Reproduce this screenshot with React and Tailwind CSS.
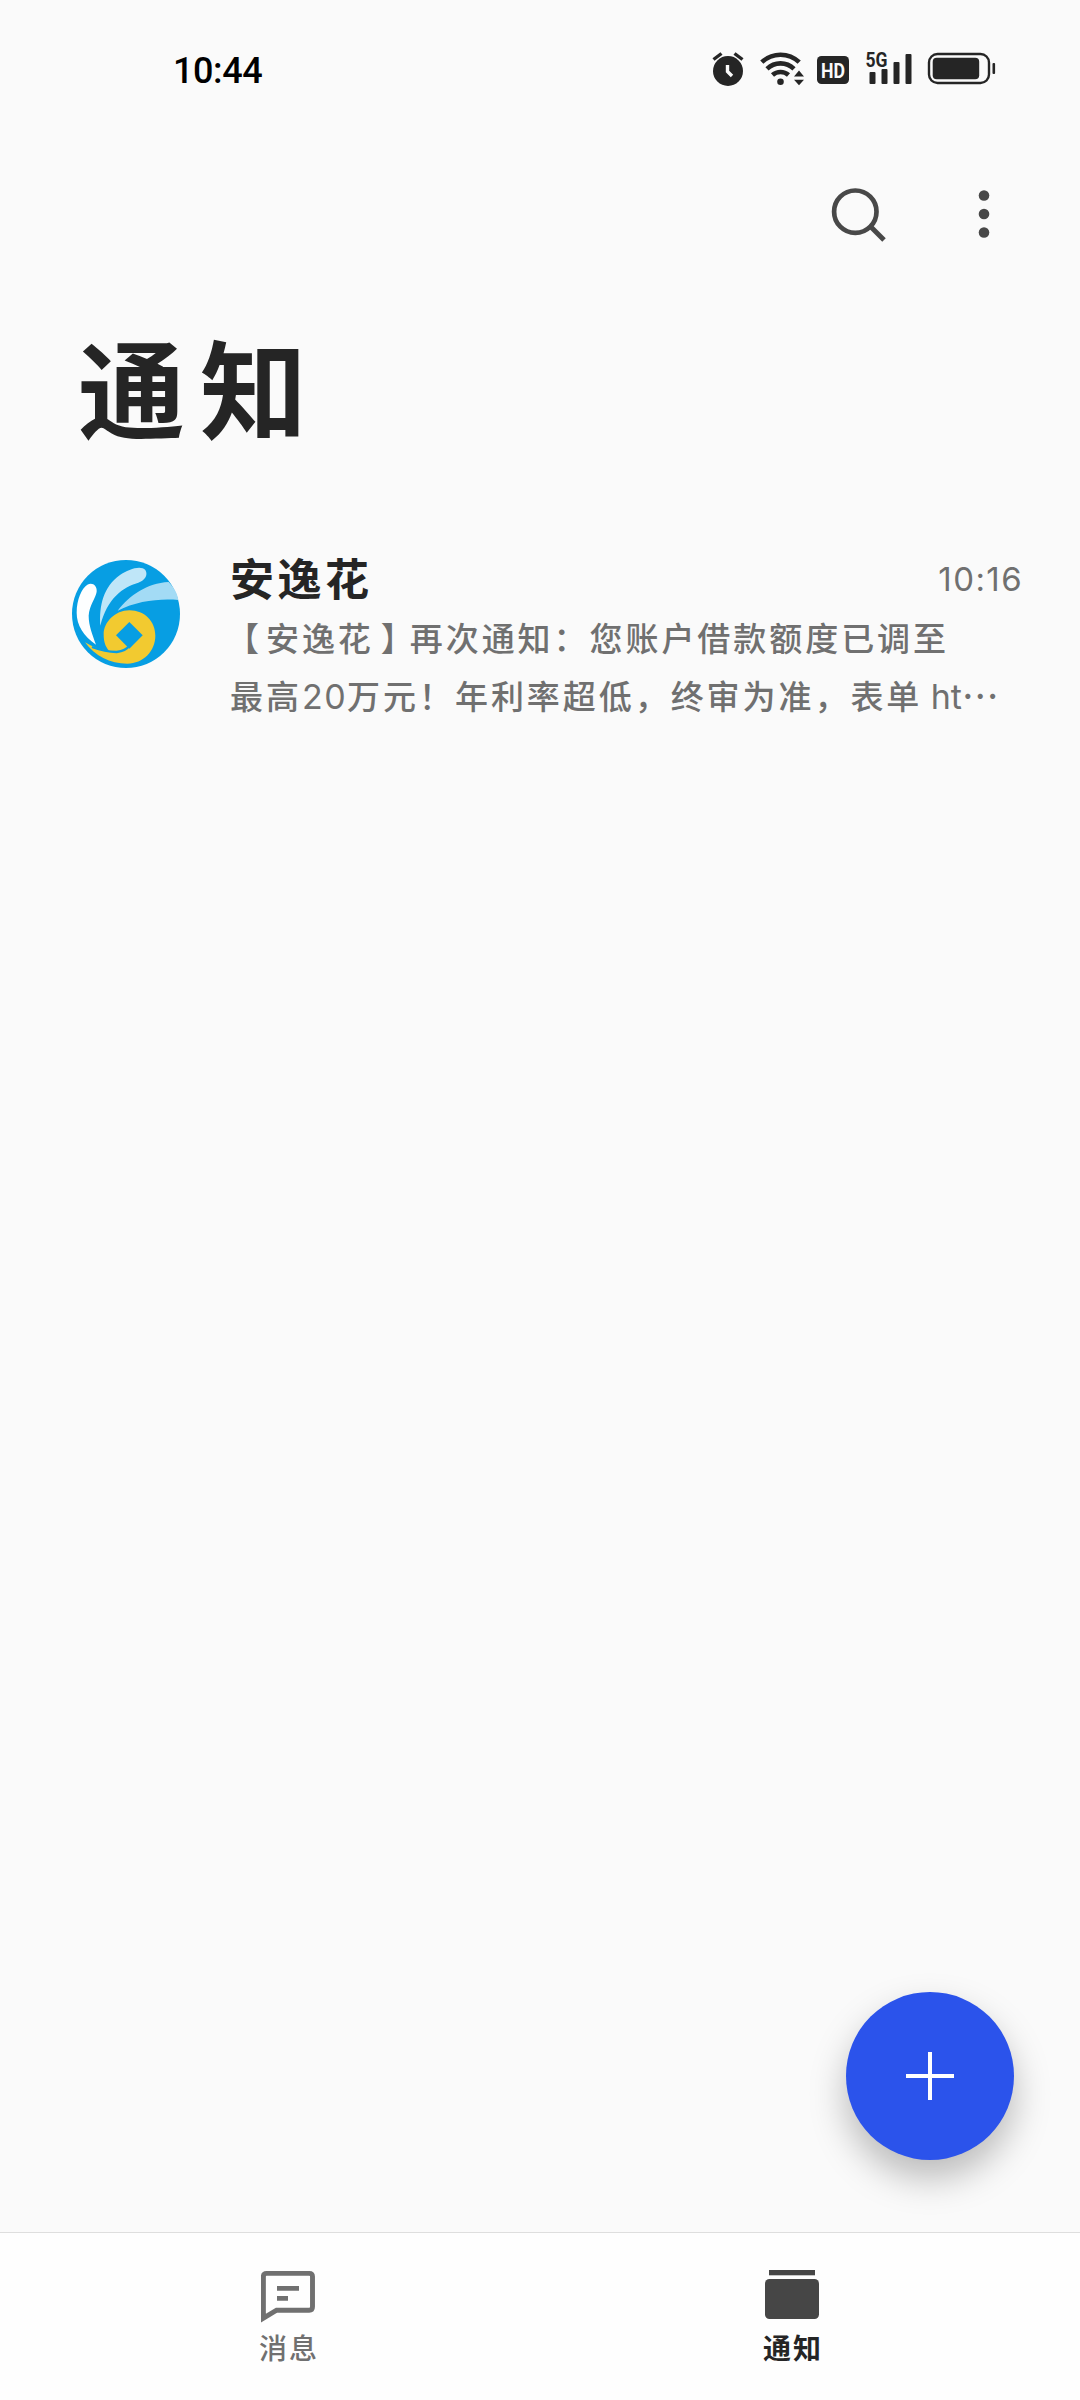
import React from 'react';

const AlarmIcon = () => (
  <svg width="32" height="36" viewBox="0 0 32 36" fill="none">
    <circle cx="16" cy="21" r="15" fill="#252525" />
    <path d="M1.5 9.5L9.5 3.5M30.5 9.5L22.5 3.5" stroke="#252525" strokeWidth="3.4" />
    <path d="M15.5 15v6.5l4.5 4.5" stroke="#fafafa" strokeWidth="3.4" />
  </svg>
);

const WifiIcon = () => (
  <svg width="44" height="36" viewBox="0 0 44 36" fill="none">
    <g stroke="#252525" strokeWidth="4.6">
      <path d="M1.8 12.2a27 27 0 0 1 37.4 0" />
      <path d="M7 18.8a19.6 19.6 0 0 1 27 0" />
      <path d="M12.5 25a12 12 0 0 1 16 0" />
    </g>
    <circle cx="20.5" cy="31.7" r="3.3" fill="#252525" />
    <path d="M39 20.5l5 6H34zM39 35.2l5-5.5H34z" fill="#252525" />
  </svg>
);

const HdIcon = () => (
  <svg width="32" height="36" viewBox="0 0 32 36">
    <rect x="0" y="6" width="32" height="28" rx="4.5" fill="#252525" />
    <text
      x="16"
      y="27.5"
      textAnchor="middle"
      textLength="24"
      lengthAdjust="spacingAndGlyphs"
      className="font-['Roboto',sans-serif] text-[21px] font-bold"
      fill="#fafafa"
    >
      HD
    </text>
  </svg>
);

const SignalIcon = () => (
  <svg width="47" height="36" viewBox="0 0 47 36" fill="#252525" className="overflow-visible">
    <text
      x="0.5"
      y="17"
      textLength="22"
      lengthAdjust="spacingAndGlyphs"
      className="font-['Roboto',sans-serif] text-[20px] font-bold"
    >
      5G
    </text>
    <rect x="4.5" y="22" width="6" height="12" rx="1" />
    <rect x="16.5" y="19" width="6" height="15" rx="1" />
    <rect x="28.5" y="12" width="6" height="22" rx="1" />
    <rect x="40.5" y="4" width="6" height="30" rx="1" />
  </svg>
);

const BatteryIcon = () => (
  <svg width="70" height="36" viewBox="0 0 70 36" fill="none">
    <rect x="2" y="4" width="60" height="29" rx="8.5" stroke="#252525" strokeWidth="2.4" />
    <rect x="5.7" y="7.8" width="46.5" height="21.4" rx="4" fill="#252525" />
    <rect x="65.5" y="13" width="2.6" height="11" rx="1" fill="#252525" />
  </svg>
);

const SearchIcon = () => (
  <svg width="56" height="56" viewBox="0 0 56 56" fill="none" stroke="#484848">
    <circle cx="25.3" cy="25.7" r="21.2" strokeWidth="4.7" />
    <path d="M40.5 40.5L54 54" strokeWidth="5" />
  </svg>
);

const MoreIcon = () => (
  <svg width="12" height="56" viewBox="0 0 12 56" fill="#484848">
    <circle cx="6" cy="9.5" r="5.3" />
    <circle cx="6" cy="28" r="5.3" />
    <circle cx="6" cy="46.5" r="5.3" />
  </svg>
);

const AvatarLogo = () => (
  <svg width="108" height="108" viewBox="0 0 324 324" className="shrink-0">
    <g transform="translate(-36 -45)">
      <circle cx="198" cy="207" r="162" fill="#079ee3" />
      <path
        d="M108 299C70 272 50 240 50 203C50 163 65 130 82 119C97 110 112 122 110 140C107 160 88 180 86 212C86 242 98 270 108 299Z"
        fill="#fdfeff"
      />
      <path
        d="M121 242C117 182 130 125 180 90C205 73 242 60 256 75C266 91 252 108 235 113C188 126 142 160 121 242Z"
        fill="#bfe6f8"
      />
      <path
        d="M173 197C210 150 260 115 326 111C343 129 352 145 355 165C298 160 230 168 173 197Z"
        fill="#a3dbf5"
      />
      <path
        d="M75 292C104 333 150 356 202 356C250 355 286 318 286 272C286 230 255 196 208 196C165 196 131 232 131 268C131 292 137 306 147 317C122 315 99 306 75 292Z"
        fill="#f2ca30"
      />
      <path d="M208 231L248 271L208 311L168 271Z" fill="#079ee3" />
      <path
        d="M96 306C125 317 148 321 170 321C188 319 201 313 208 302"
        fill="none"
        stroke="#079ee3"
        strokeWidth="7"
      />
    </g>
  </svg>
);

const MessageIcon = () => (
  <svg width="54" height="54" viewBox="0 0 54 54" fill="none" stroke="#707070">
    <path
      d="M2.4 48.2V6.6Q2.4 3.4 5.6 3.4H48.2Q51.5 3.4 51.5 6.6V36.8Q51.5 40.2 48.2 40.2H15.6Z"
      strokeWidth="4.9"
    />
    <path d="M16 18.3H38M16 28.4H27" strokeWidth="4.8" />
  </svg>
);

const NoticeIcon = () => (
  <svg width="54" height="54" viewBox="0 0 54 54" fill="#464646">
    <rect x="4" y="0" width="46" height="5.3" />
    <rect x="0" y="9" width="54" height="40" rx="4.5" />
  </svg>
);

const TABS = [
  { label: '消息', icon: MessageIcon, style: 'text-[#707070] font-medium' },
  { label: '通知', icon: NoticeIcon, style: 'text-[#252525] font-bold' },
];

const App = () => {
  return (
    <div className="relative flex h-[2400px] w-[1080px] flex-col overflow-hidden bg-[#fafafa] font-['Inter','Noto_Sans_CJK_SC',sans-serif] text-[#252525]">
      {/* Status Bar */}
      <div className="flex h-[136px] items-center justify-between pl-[173px] pr-[83px]">
        <span className="pt-[6px] font-['Roboto',sans-serif] text-[36px] font-medium leading-none tracking-[-0.4px] text-black">
          10:44
        </span>
        <div className="flex items-center">
          <AlarmIcon />
          <div className="ml-4 mr-[13px]">
            <WifiIcon />
          </div>
          <HdIcon />
          <div className="ml-4 mr-[15px]">
            <SignalIcon />
          </div>
          <BatteryIcon />
        </div>
      </div>

      {/* Toolbar */}
      <div className="flex h-[156px] items-center justify-end gap-[92px] pr-[90px]">
        <SearchIcon />
        <MoreIcon />
      </div>

      <h1 className="pl-[78px] pt-[41px] text-[107px] font-bold leading-[119px] tracking-[15px]">通知</h1>

      {/* Conversation */}
      <div className="flex pl-[72px] pr-[57px] pt-[96px]">
        <div className="pt-[12px]">
          <AvatarLogo />
        </div>
        <div className="ml-[50px] flex-1">
          <div className="flex h-[60px] items-center justify-between pt-[3px]">
            <span className="text-[44px] font-bold leading-none tracking-[3.5px]">安逸花</span>
            <span className="text-[33px] leading-none tracking-[1.4px] text-[#707070]">10:16</span>
          </div>
          <p className="whitespace-nowrap font-['Noto_Sans_CJK_SC',sans-serif] text-[33px] font-medium leading-[58px] tracking-[2.95px] text-[#707070]">
            <span className="-ml-[4px] mr-[4px]">【</span>安逸花<span className="ml-[7px] -mr-[7px]">】</span>
            再次通知：您账户借款额度已调至
            <br />
            最高<span className="font-['Inter',sans-serif] text-[34px] font-normal tracking-[1.5px]">20</span>
            万元！年利率超低，终审为准，表单{' '}
            <span className="-ml-[2px] font-['Inter',sans-serif] text-[34px] font-normal tracking-normal">ht</span>
            <span className="relative -top-[10px]">…</span>
          </p>
        </div>
      </div>

      {/* Compose Button */}
      <button className="absolute left-[846px] top-[1992px] flex h-[168px] w-[168px] items-center justify-center rounded-full bg-[#2b53eb] shadow-[0_18px_36px_rgba(0,0,0,0.26)]">
        <svg width="48" height="48" viewBox="0 0 48 48" stroke="#ffffff" strokeWidth="4">
          <path d="M24 0V48M0 24H48" />
        </svg>
      </button>

      {/* Bottom Tabs */}
      <nav className="mt-auto flex h-[168px] border-t border-[#dedede] bg-[#fefefe] px-9">
        {TABS.map(({ label, icon: Icon, style }) => (
          <div key={label} className={`flex flex-1 flex-col items-center pt-[37px] ${style}`}>
            <Icon />
            <span className="mt-[9px] pl-[2px] text-[28px] leading-8 tracking-[2px]">{label}</span>
          </div>
        ))}
      </nav>
    </div>
  );
};

export default App;
